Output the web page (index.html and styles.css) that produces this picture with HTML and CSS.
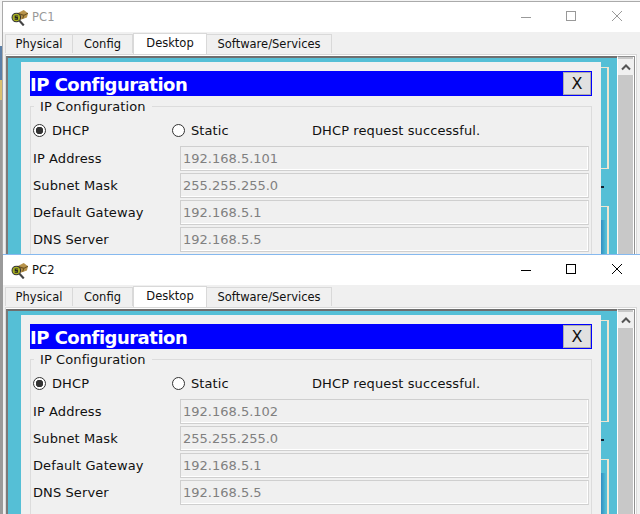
FILE: index.html
```html
<!DOCTYPE html>
<html lang="en">
<head>
<meta charset="utf-8">
<title>PC1 and PC2 IP Configuration</title>
<link rel="stylesheet" href="styles.css">
</head>
<body>
<section class="window inactive">
  <header class="titlebar">
    <svg class="app-icon" viewBox="0 0 16 16"><path d="M6 4 L12 1 L16 4 L15 8 L9 10 L6 8Z" fill="#b8934a"/><path d="M6 4 L12 6 L16 4 M12 6 L11 9" fill="none" stroke="#6a5120"/><circle cx="5" cy="8" r="4" fill="#a8b020" stroke="#333"/><path d="M6.500 6.500H4V8H6V9.500H3.500" fill="none" stroke="#222"/><path d="M8 11 L12 15.500" stroke="#444" stroke-width="2"/></svg>
    <span class="win-title">PC1</span>
    <div class="controls">
      <svg viewBox="0 0 46 16"><path d="M19 8.500H29" class="ctl"/></svg>
      <svg viewBox="0 0 46 16"><rect x="18.500" y="2.500" width="9" height="9" class="ctl"/></svg>
      <svg viewBox="0 0 46 16"><path d="M18 2L28 12M28 2L18 12" class="ctl"/></svg>
    </div>
  </header>
  <nav class="tabs">
    <span class="tab t1">Physical</span><span class="tab t2">Config</span><span class="tab t3 active">Desktop</span><span class="tab t4">Software/Services</span>
  </nav>
  <div class="frame">
    <div class="desk">
      <div class="deco">
        <div class="deco-a"></div><div class="deco-b"></div>
      </div>
      <div class="panel">
        <div class="appbar"><h1>IP Configuration</h1><button class="close">X</button></div>
        <fieldset class="group">
          <legend>IP Configuration</legend>
          <div class="mode">
            <span class="radio-wrap r-a"><i class="radio on"></i>DHCP</span>
            <span class="radio-wrap r-b"><i class="radio"></i>Static</span>
            <span>DHCP request successful.</span>
          </div>
          <div class="row"><label>IP Address</label><div class="field">192.168.5.101</div></div>
          <div class="row"><label>Subnet Mask</label><div class="field">255.255.255.0</div></div>
          <div class="row"><label>Default Gateway</label><div class="field">192.168.5.1</div></div>
          <div class="row"><label>DNS Server</label><div class="field">192.168.5.5</div></div>
        </fieldset>
      </div>
    </div>
    <div class="scroll"><div class="up"><svg viewBox="0 0 10 8"><path d="M1 6.500L5 2.500L9 6.500" fill="none" stroke="#555" stroke-width="2"/></svg></div></div>
  </div>
</section>
<section class="window">
  <header class="titlebar">
    <svg class="app-icon" viewBox="0 0 16 16"><path d="M6 4 L12 1 L16 4 L15 8 L9 10 L6 8Z" fill="#b8934a"/><path d="M6 4 L12 6 L16 4 M12 6 L11 9" fill="none" stroke="#6a5120"/><circle cx="5" cy="8" r="4" fill="#a8b020" stroke="#333"/><path d="M6.500 6.500H4V8H6V9.500H3.500" fill="none" stroke="#222"/><path d="M8 11 L12 15.500" stroke="#444" stroke-width="2"/></svg>
    <span class="win-title">PC2</span>
    <div class="controls">
      <svg viewBox="0 0 46 16"><path d="M19 8.500H29" class="ctl"/></svg>
      <svg viewBox="0 0 46 16"><rect x="18.500" y="2.500" width="9" height="9" class="ctl"/></svg>
      <svg viewBox="0 0 46 16"><path d="M18 2L28 12M28 2L18 12" class="ctl"/></svg>
    </div>
  </header>
  <nav class="tabs">
    <span class="tab t1">Physical</span><span class="tab t2">Config</span><span class="tab t3 active">Desktop</span><span class="tab t4">Software/Services</span>
  </nav>
  <div class="frame">
    <div class="desk">
      <div class="deco">
        <div class="deco-a"></div><div class="deco-b"></div>
      </div>
      <div class="panel">
        <div class="appbar"><h1>IP Configuration</h1><button class="close">X</button></div>
        <fieldset class="group">
          <legend>IP Configuration</legend>
          <div class="mode">
            <span class="radio-wrap r-a"><i class="radio on"></i>DHCP</span>
            <span class="radio-wrap r-b"><i class="radio"></i>Static</span>
            <span>DHCP request successful.</span>
          </div>
          <div class="row"><label>IP Address</label><div class="field">192.168.5.102</div></div>
          <div class="row"><label>Subnet Mask</label><div class="field">255.255.255.0</div></div>
          <div class="row"><label>Default Gateway</label><div class="field">192.168.5.1</div></div>
          <div class="row"><label>DNS Server</label><div class="field">192.168.5.5</div></div>
        </fieldset>
      </div>
    </div>
    <div class="scroll"><div class="up"><svg viewBox="0 0 10 8"><path d="M1 6.500L5 2.500L9 6.500" fill="none" stroke="#555" stroke-width="2"/></svg></div></div>
  </div>
</section>
</body>
</html>
```
FILE: styles.css
```css
html, body { margin: 0; padding: 0; }
body {
  width: 640px; height: 514px; overflow: hidden; padding-top: 1px; box-sizing: border-box;
  background: linear-gradient(#f4f4f4 0 46px, #5c80a8 46px 80px, #d8c070 80px 100px, #9a9a9a 100px);
  font-family: "DejaVu Sans", sans-serif; font-size: 13px; letter-spacing: 0.100px; color: #111;
}
.window {
  height: 253px; box-sizing: border-box; overflow: hidden; margin-left: 3px; background: #f0f0f0;
  border-top: 1px solid #86b9ef; display: flex; flex-direction: column;
}
.window:last-child { height: 260px; }
.window.inactive { border-top-color: #aaa; margin-left: 2px; border-left: 1px solid #aaa; }
.titlebar {
  height: 30px; flex: none; background: #fff; display: flex; align-items: center; padding: 0 0 0 8px;
}
.app-icon { width: 17px; height: 17px; flex: none; }
.win-title { margin-left: 4px; font-size: 11.500px; color: #111; }
.inactive .win-title { color: #999; }
.controls { margin-left: auto; display: flex; gap: 0; padding-bottom: 1px; }
.controls svg { width: 46px; height: 16px; }
.ctl { fill: none; stroke: #000; stroke-width: 1; }
.inactive .ctl { stroke: #999; }
.tabs { height: 22px; flex: none; display: flex; align-items: flex-end; padding-left: 2px; font-size: 11.500px; letter-spacing: 0; }
.tab {
  box-sizing: border-box; height: 19px; display: flex; align-items: center; justify-content: center;
  border: 1px solid #d9d9d9; border-bottom: 0; background: #f0f0f0; color: #111; margin-bottom: 1px;
}
.t1 { width: 68px; } .t2 { width: 60px; border-left: 0; } .t3 { width: 74px; } .t4 { width: 125px; border-left: 0; }
.tab.active { height: 21px; background: #fff; padding-bottom: 3px; margin-bottom: 0; }
.frame {
  flex: 1; min-height: 0; display: flex; margin: 0 3px 0 2px; border: 1px solid #d9d9d9; border-bottom: 0;
  padding: 1px 1px 0 0; background: #fff; box-sizing: border-box;
}
.desk {
  flex: 1; position: relative; border-top: 2px solid #6e6e6e; border-left: 2px solid #7a7a7a; background: #55bfd6;
  padding: 4px 16px 0 13px; min-width: 0; overflow: hidden;
}
.deco { position: absolute; top: 9px; left: 593px; width: 8px; height: 200px; }
.deco::after { content: ""; position: absolute; left: 0; top: 119px; width: 3px; height: 2px; background: #123; }
.deco-a { height: 100px; border: 1px solid #f0e6d0; border-width: 1px 2px 1px 0; }
.deco-b { margin-top: 37px; height: 80px; border: 1px solid #f0e6d0; border-width: 1px 2px 0 0;
  background: linear-gradient(90deg, #2f8fc2, transparent 5px) no-repeat 0 13px; }
.panel { position: relative; background: #f0f0f0; height: 220px; padding: 9px 9px 0 9px; }
.appbar { background: #0000ff; height: 25px; display: flex; align-items: center; justify-content: space-between; padding-right: 1px; }
.appbar h1 { margin: 0; padding-top: 2px; font: bold 18px/23px "DejaVu Sans", sans-serif; color: #fff; letter-spacing: -0.500px; }
.close {
  width: 28px; height: 23px; padding: 0; background: #e1e1e1; border: 1px solid #adadad; border-radius: 0;
  font: 16px "DejaVu Sans", sans-serif; color: #111;
}
.group { margin: 3px 0 0 0; padding: 8px 2px 0 0; border: 1px solid #dcdcdc; border-radius: 0; min-width: 0; width: 562px; box-sizing: border-box; height: 220px; }
.group legend { margin-left: 3px; padding: 0 6px; line-height: 15px; }
.mode { display: flex; align-items: center; height: 17px; margin-bottom: 7px; }
.radio-wrap { display: flex; align-items: center; box-sizing: border-box; }
.r-a { width: 141px; padding-left: 2px; }
.r-b { width: 140px; }
.radio { box-sizing: border-box; width: 13px; height: 13px; border: 1px solid #333; border-radius: 50%; background: #fff; margin-right: 6px; display: block; flex: none; }
.radio.on { background: radial-gradient(circle, #333 0 3.500px, #fff 4px); }
.row { display: flex; align-items: center; height: 25px; margin-bottom: 2px; }
.row label { width: 149px; padding-left: 2px; box-sizing: border-box; flex: none; }
.field {
  box-sizing: border-box; width: 409px; height: 25px; padding-left: 2px; line-height: 23px; color: #808080; letter-spacing: 0;
  background: #f0f0f0; border: 1px solid #cfcfcf; border-right-color: #d8d8d8; box-shadow: inset -1px -1px 0 #fff;
}
.scroll { width: 18px; flex: none; border-left: 1px solid #fff; border-right: 1px solid #8f8f8f; background: #c8c8c8; box-sizing: border-box; padding-top: 2px; box-shadow: inset -1px 0 0 #fff; border-top: 1px solid #8f8f8f; }
.up { height: 16px; background: #f0f0f0; display: flex; align-items: center; justify-content: center; }
.up svg { width: 10px; height: 8px; }
```
